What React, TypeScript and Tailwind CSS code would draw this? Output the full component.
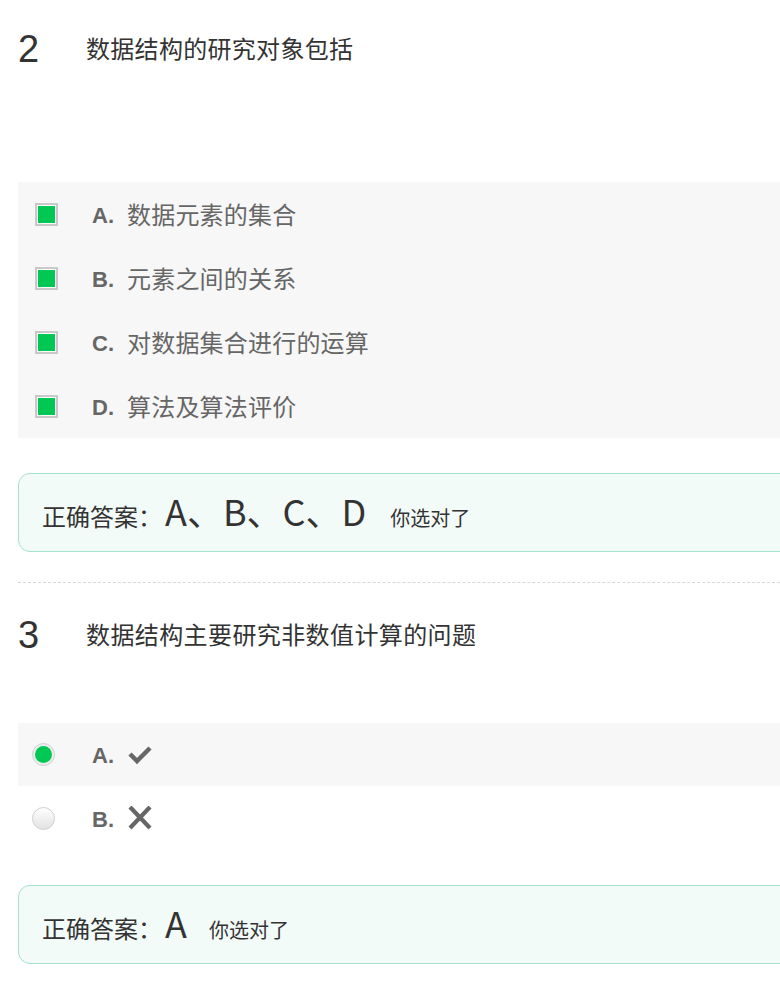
import React from "react";

const cjk = { fontFamily: '"Noto Sans CJK SC", "Noto Sans", sans-serif' };
const arial = { fontFamily: '"Liberation Sans", Arial, "Noto Sans CJK SC", sans-serif' };

function CheckBox() {
  return (
    <div className="w-[23px] h-[23px] border-2 border-[#c9c9c9] bg-white p-[1px] box-border">
      <div className="w-full h-full bg-[#00c853]" />
    </div>
  );
}

function Radio({ checked }: { checked: boolean }) {
  if (checked) {
    return (
      <div className="w-[23px] h-[23px] rounded-full border border-[#d0d0d0] bg-[#eeeeee] flex items-center justify-center box-border">
        <div className="w-[17px] h-[17px] rounded-full bg-[#00c853]" />
      </div>
    );
  }
  return (
    <div className="w-[23px] h-[23px] rounded-full border border-[#cfcfcf] bg-gradient-to-b from-[#ffffff] to-[#e2e2e2] box-border" />
  );
}

function Letter({ children }: { children: React.ReactNode }) {
  return (
    <div className="w-[35px] flex items-center h-[24px]">
      <span className="text-[22px] font-bold text-[#666] leading-none mt-[3px]" style={arial}>
        {children}
      </span>
    </div>
  );
}

function OptionRow({ letter, text }: { letter: string; text: string }) {
  return (
    <div className="h-[64px] flex items-center">
      <div className="w-[74px] flex justify-start pl-[17px]">
        <CheckBox />
      </div>
      <Letter>{letter}</Letter>
      <span className="text-[24px] text-[#666] leading-none tracking-[0.2px]" style={cjk}>
        {text}
      </span>
    </div>
  );
}

function Answer({ answer, gap }: { answer: React.ReactNode; gap: string }) {
  return (
    <div className="h-[79px] rounded-[12px] border border-[#a4e2cb] bg-[#f3fbf8] flex items-center pl-[23px]">
      <div className="flex items-baseline text-[#333]" style={cjk}>
        <span className="text-[24px]">正确答案：</span>
        <span className="text-[36px] ml-[3px] leading-none">{answer}</span>
        <span className={"text-[20px] " + gap}>你选对了</span>
      </div>
    </div>
  );
}

function CheckIcon() {
  return (
    <svg width="26" height="20" viewBox="0 0 26 20">
      <polyline points="3,9 10,16 23,3" fill="none" stroke="#666" strokeWidth="4.5" strokeLinecap="butt" strokeLinejoin="miter" />
    </svg>
  );
}

function XIcon() {
  return (
    <svg width="26" height="24" viewBox="0 0 26 24">
      <line x1="3" y1="1" x2="23" y2="22" stroke="#666" strokeWidth="4.2" />
      <line x1="23" y1="1" x2="3" y2="22" stroke="#666" strokeWidth="4.2" />
    </svg>
  );
}

export default function App() {
  return (
    <div className="w-[780px] h-[989px] overflow-hidden bg-white">
      <div className="w-[820px] pl-[18px]">
        {/* Question 2 */}
        <div className="h-[182px] flex items-start pt-[30px]">
          <div className="w-[68px] text-[38px] leading-none text-[#333]" style={arial}>2</div>
          <div className="text-[24px] leading-none text-[#333] mt-[6px] tracking-[0.3px]" style={cjk}>数据结构的研究对象包括</div>
        </div>
        <div className="bg-[#f7f7f7]">
          <OptionRow letter="A." text="数据元素的集合" />
          <OptionRow letter="B." text="元素之间的关系" />
          <OptionRow letter="C." text="对数据集合进行的运算" />
          <OptionRow letter="D." text="算法及算法评价" />
        </div>
        <div className="mt-[35px]">
          <Answer answer="A、B、C、D" gap="ml-[24px]" />
        </div>
        <div className="mt-[30px] border-t border-dashed border-[#d9d9d9]" />

        {/* Question 3 */}
        <div className="h-[140px] flex items-start pt-[33px]">
          <div className="w-[68px] text-[38px] leading-none text-[#333]" style={arial}>3</div>
          <div className="text-[24px] leading-none text-[#333] mt-[6px] tracking-[0.4px]" style={cjk}>数据结构主要研究非数值计算的问题</div>
        </div>
        <div>
          <div className="h-[63px] flex items-center bg-[#f7f7f7]">
            <div className="w-[74px] pl-[14px]">
              <Radio checked />
            </div>
            <Letter>A.</Letter>
            <CheckIcon />
          </div>
          <div className="h-[64px] flex items-center">
            <div className="w-[74px] pl-[14px]">
              <Radio checked={false} />
            </div>
            <Letter>B.</Letter>
            <XIcon />
          </div>
        </div>
        <div className="mt-[35px]">
          <Answer answer="A" gap="ml-[22px]" />
        </div>
      </div>
    </div>
  );
}
